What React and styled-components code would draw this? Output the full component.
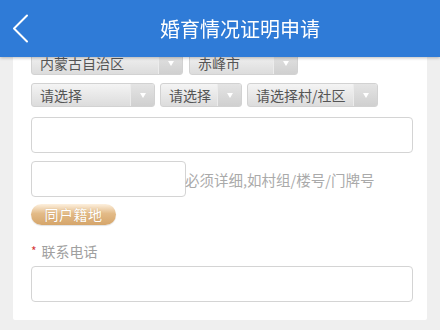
import React from "react";
import styled, { createGlobalStyle } from "styled-components";

const Global = createGlobalStyle`
  html, body { margin: 0; padding: 0; }
  body {
    background: #efefef;
    font-family: "Noto Sans CJK SC", "Noto Sans", sans-serif;
    width: 440px;
    height: 330px;
    overflow: hidden;
  }
`;

const Header = styled.header`
  position: fixed;
  top: 0;
  left: 0;
  right: 0;
  height: 57px;
  background: #2f7bd7;
  display: flex;
  align-items: center;
  box-shadow: 0 1px 3px rgba(0, 0, 0, 0.25);
  z-index: 10;
`;

const Back = styled.div`
  width: 40px;
  height: 57px;
  display: flex;
  align-items: center;
  padding-left: 12px;
  box-sizing: border-box;
`;

const Title = styled.h1`
  flex: 1;
  margin: 0;
  text-align: center;
  color: #fff;
  font-size: 20px;
  font-weight: 400;
  line-height: 28px;
`;

const Page = styled.main`
  padding: 45px 13px 0;
`;

const Card = styled.section`
  background: #fff;
  padding: 6px 14px 18px 18px;
  border-radius: 2px;
`;

const Row = styled.div`
  display: flex;
  align-items: center;
  gap: ${(p) => p.$gap || 0}px;
  margin-top: ${(p) => p.$mt || 0}px;
`;

const SelectBox = styled.div`
  width: ${(p) => p.$w}px;
  height: 24px;
  box-sizing: border-box;
  display: flex;
  border-radius: 3px;
  border: 1px solid #d2d2d2;
  background: linear-gradient(#f4f4f4, #dcdcdc);
  overflow: hidden;
`;

const SelectText = styled.span`
  flex: 1;
  padding-left: 8px;
  font-size: 14px;
  line-height: 22px;
  color: #555;
  white-space: nowrap;
`;

const Arrow = styled.span`
  width: 23px;
  display: flex;
  align-items: center;
  justify-content: center;
  background: linear-gradient(#e4e4e4, #d0d0d0);
  border-left: 1px solid #ececec;
  &::after {
    content: "";
    border-left: 3.5px solid transparent;
    border-right: 3.5px solid transparent;
    border-top: 5px solid #fff;
  }
`;

const Input = styled.div`
  width: ${(p) => (p.$w ? `${p.$w}px` : "100%")};
  height: 36px;
  box-sizing: border-box;
  border: 1.5px solid #d4d4d4;
  border-radius: 4px;
  background: #fff;
  margin-top: ${(p) => p.$mt || 0}px;
  flex-shrink: 0;
`;

const Hint = styled.span`
  font-size: 14.5px;
  color: #aaa;
  white-space: nowrap;
  margin-left: -1px;
`;

const PillButton = styled.div`
  width: 85px;
  height: 21px;
  margin-top: 7px;
  border-radius: 11px;
  background: linear-gradient(#fdf0de, #e3bb88 45%, #d5a56a);
  color: #fff;
  font-size: 14px;
  line-height: 21px;
  text-align: center;
  letter-spacing: 0.5px;
  text-shadow: 0 0 1px rgba(180, 130, 70, 0.6);
  box-shadow: 0 1px 1px rgba(0, 0, 0, 0.12);
`;

const Label = styled.div`
  margin-top: 16px;
  font-size: 14px;
  line-height: 20px;
  color: #a0a0a0;
  display: flex;
  align-items: center;
  gap: 5px;
`;

const Star = styled.span`
  color: #d63a3a;
  font-size: 12px;
`;

const selects1 = [
  { t: "内蒙古自治区", w: 152 },
  { t: "赤峰市", w: 109 },
];
const selects2 = [
  { t: "请选择", w: 124 },
  { t: "请选择", w: 82 },
  { t: "请选择村/社区", w: 131 },
];

export default function App() {
  return (
    <>
      <Global />
      <Header>
        <Back>
          <svg width="18" height="30" viewBox="0 0 18 30">
            <polyline
              points="15,1.5 2,14.5 15,27.5"
              fill="none"
              stroke="#fff"
              strokeWidth="2"
              strokeLinecap="round"
              strokeLinejoin="round"
            />
          </svg>
        </Back>
        <Title>婚育情况证明申请</Title>
      </Header>
      <Page>
        <Card>
          <Row $gap={6}>
            {selects1.map((s, i) => (
              <SelectBox key={i} $w={s.w}>
                <SelectText>{s.t}</SelectText>
                <Arrow />
              </SelectBox>
            ))}
          </Row>
          <Row $gap={5} $mt={8}>
            {selects2.map((s, i) => (
              <SelectBox key={i} $w={s.w}>
                <SelectText>{s.t}</SelectText>
                <Arrow />
              </SelectBox>
            ))}
          </Row>
          <Input $mt={10} />
          <Row $mt={8}>
            <Input $w={155} />
            <Hint>必须详细,如村组/楼号/门牌号</Hint>
          </Row>
          <PillButton>同户籍地</PillButton>
          <Label>
            <Star>*</Star>联系电话
          </Label>
          <Input $mt={5} />
        </Card>
      </Page>
    </>
  );
}
